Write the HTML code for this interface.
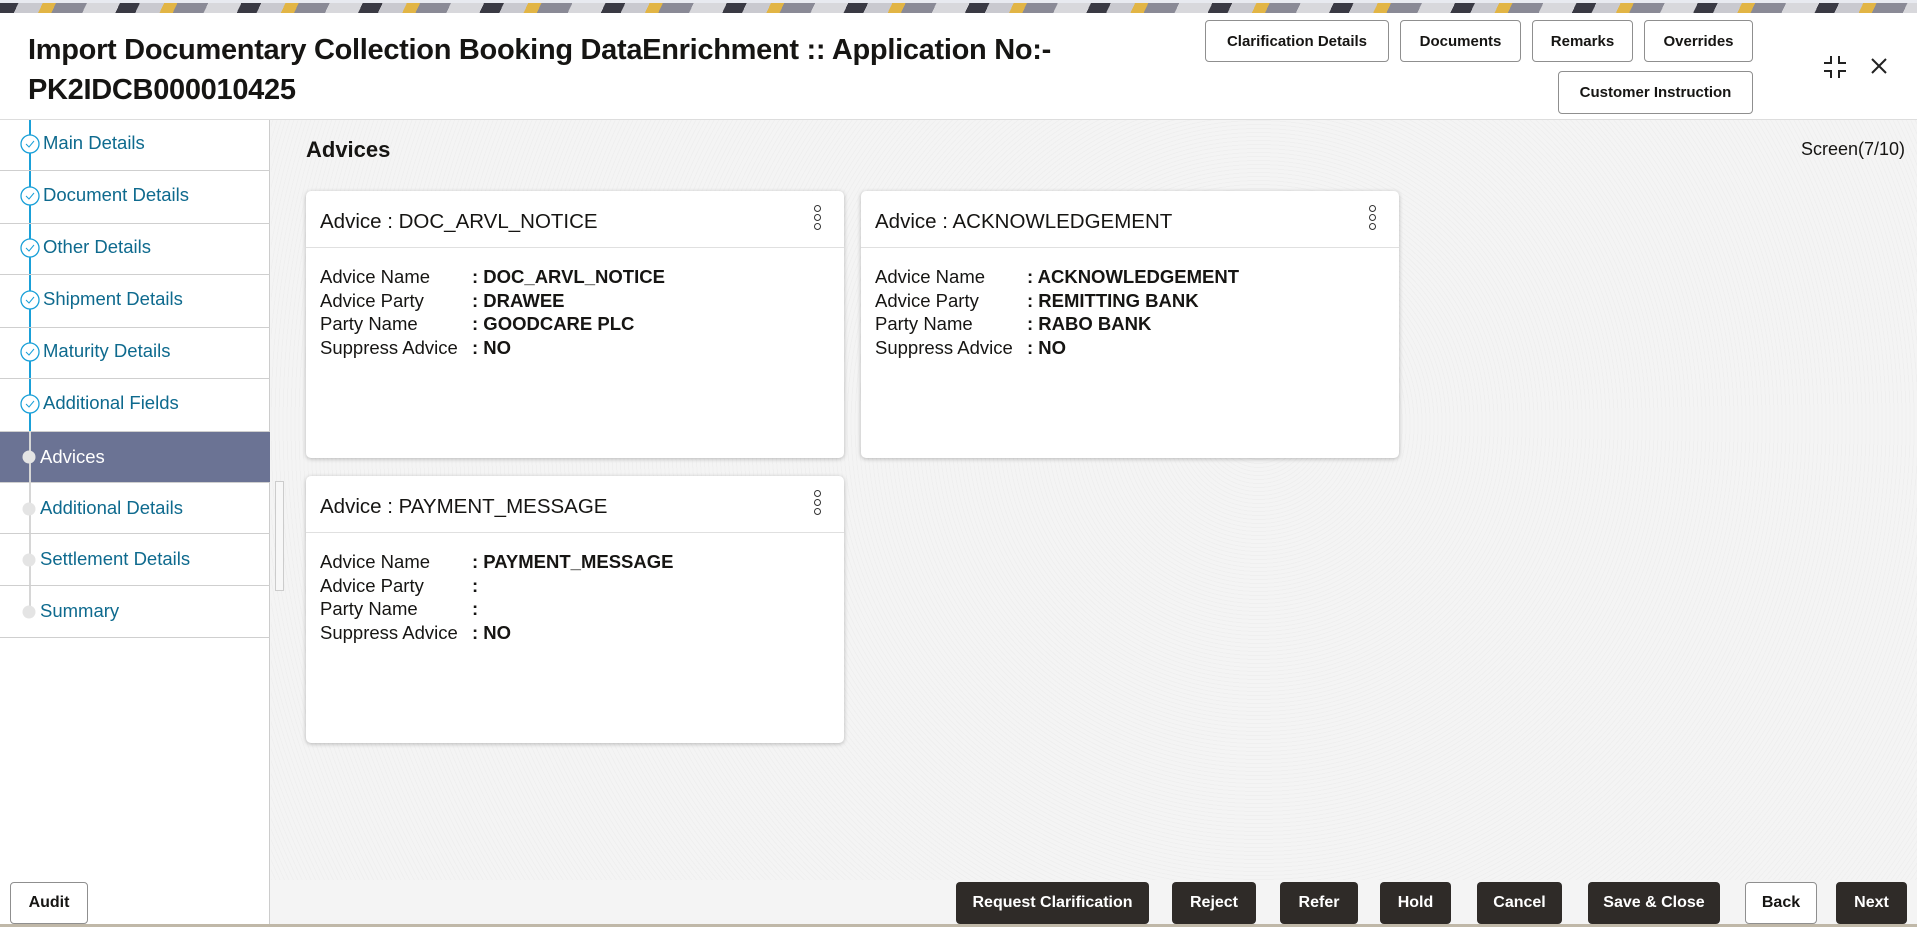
<!DOCTYPE html>
<html><head><meta charset="utf-8"><style>
*{box-sizing:border-box;margin:0;padding:0}
body{width:1917px;height:927px;overflow:hidden;font-family:"Liberation Sans",sans-serif;background:#f4f4f4;position:relative;color:#161513}
.banner{position:absolute;left:0;top:0;width:1917px;height:13px;background:repeating-linear-gradient(115deg,#3a3a44 0 18px,#c9c9cf 18px 40px,#e2b545 40px 52px,#8a8a96 52px 80px,#d8d8dc 80px 110px);}
.banner:before{content:"";position:absolute;left:0;top:0;width:100%;height:3px;background:#e8eaf0}
.hdr{position:absolute;left:0;top:13px;width:1917px;height:107px;background:#fff;border-bottom:1px solid #ddd}
.title{position:absolute;left:28px;top:17px;font-size:29px;font-weight:bold;line-height:40px;letter-spacing:-0.3px}
.btn{position:absolute;border:1px solid #8f8f8f;border-radius:4px;background:#fff;font-size:15px;font-weight:bold;display:flex;align-items:center;justify-content:center;color:#161513}
.side{position:absolute;left:0;top:120px;width:270px;height:760px;background:#fff;border-right:1px solid #ccc}
.item{position:absolute;left:0;width:270px;border-bottom:1px solid #cfcfcf;font-size:18.5px;color:#0e6a8e}
.item span{position:absolute;left:43px}
.vl{position:absolute;left:29px;width:2px}
.main{position:absolute;left:271px;top:120px;right:0;height:760px;background:repeating-radial-gradient(circle at 60% 40%,#f4f4f4 0 3px,#efefef 3px 4px)}
.card{position:absolute;width:538px;height:267px;background:#fff;border-radius:5px;box-shadow:0 1px 4px rgba(0,0,0,.25)}
.card h3{height:57px;border-bottom:1px solid #e0e0e0;font-size:20.5px;font-weight:normal;padding:19px 0 0 14px}
.rows{padding:17px 0 0 14px;font-size:18.5px;line-height:23.7px}
.rows div{display:flex}
.rows div span:first-child{width:152px}
.rows b{font-weight:bold}
.kb{position:absolute;right:23px;top:14px;width:7px}
.kb i{display:block;width:7px;height:7px;border:1.3px solid #333;border-radius:50%;margin-bottom:2px}
.foot{position:absolute;left:0;top:880px;width:1917px;height:47px;border-bottom:3px solid #c0b8a8}
.fb{position:absolute;top:2px;height:42px;border-radius:4px;background:#2f2b28;color:#fff;font-size:16px;font-weight:bold;display:flex;align-items:center;justify-content:center}
.fw{background:#fff;color:#161513;border:1px solid #8f8f8f}
</style></head><body>
<div class="banner"></div>
<div class="hdr">
<div class="title">Import Documentary Collection Booking DataEnrichment :: Application No:-<br>PK2IDCB000010425</div>
</div>
<div class="btn" style="left:1205px;top:20px;width:184px;height:42px">Clarification Details</div>
<div class="btn" style="left:1400px;top:20px;width:121px;height:42px">Documents</div>
<div class="btn" style="left:1532px;top:20px;width:101px;height:42px">Remarks</div>
<div class="btn" style="left:1644px;top:20px;width:109px;height:42px">Overrides</div>
<div class="btn" style="left:1558px;top:71px;width:195px;height:43px">Customer Instruction</div>
<svg style="position:absolute;left:1822px;top:54px" width="26" height="26" viewBox="0 0 26 26" fill="none" stroke="#222" stroke-width="2"><path d="M9 2v7H2M17 2v7h7M9 24v-7H2M17 24v-7h7"/></svg>
<svg style="position:absolute;left:1870px;top:57px" width="18" height="18" viewBox="0 0 18 18" stroke="#222" stroke-width="2"><path d="M2 2l14 14M16 2L2 16"/></svg>

<div class="side">
<div class="vl" style="top:0;height:312px;background:#1aa0d8"></div>
<div class="vl" style="top:312px;height:186px;background:#d6d6d6"></div>
<div class="item" style="top:0;height:51px"><span style="top:12px">Main Details</span></div>
<div class="item" style="top:51px;height:53px"><span style="top:13px">Document Details</span></div>
<div class="item" style="top:104px;height:51px"><span style="top:12px">Other Details</span></div>
<div class="item" style="top:155px;height:53px"><span style="top:13px">Shipment Details</span></div>
<div class="item" style="top:208px;height:51px"><span style="top:12px">Maturity Details</span></div>
<div class="item" style="top:259px;height:53px"><span style="top:13px">Additional Fields</span></div>
<div class="item" style="top:312px;height:51px;background:#6b7394;color:#fff"><span style="left:40px;top:14px">Advices</span></div>
<div class="vl" style="top:312px;height:51px;background:#d6d6d6"></div>
<div class="item" style="top:363px;height:51px"><span style="left:40px;top:14px">Additional Details</span></div>
<div class="item" style="top:414px;height:52px"><span style="left:40px;top:14px">Settlement Details</span></div>
<div class="item" style="top:466px;height:52px"><span style="left:40px;top:14px">Summary</span></div>
<svg style="position:absolute;left:0;top:0" width="60" height="520">
<g fill="#fff" stroke="#1aa0d8" stroke-width="1.3">
<circle cx="30" cy="24" r="9"/><circle cx="30" cy="76" r="9"/><circle cx="30" cy="128" r="9"/><circle cx="30" cy="180" r="9"/><circle cx="30" cy="232" r="9"/><circle cx="30" cy="284" r="9"/></g>
<g fill="none" stroke="#1aa0d8" stroke-width="1"><path d="M26 24l3 3 5-6M26 76l3 3 5-6M26 128l3 3 5-6M26 180l3 3 5-6M26 232l3 3 5-6M26 284l3 3 5-6"/></g>
<circle cx="29" cy="337" r="6.5" fill="#e4e4e4"/><circle cx="29" cy="389" r="6.5" fill="#e4e4e4"/><circle cx="29" cy="440" r="6.5" fill="#e4e4e4"/><circle cx="29" cy="492" r="6.5" fill="#e4e4e4"/>
</svg>
</div>

<div class="main">
<div style="position:absolute;left:35px;top:17px;font-size:22px;font-weight:bold">Advices</div>
<div style="position:absolute;right:12px;top:19px;font-size:18px">Screen(7/10)</div>
<div style="position:absolute;left:4px;top:361px;width:9px;height:110px;border:1px solid #ccc;background:#f7f7f7"></div>
<div class="card" style="left:35px;top:71px"><h3>Advice : DOC_ARVL_NOTICE</h3><div class="kb"><i></i><i></i><i></i></div>
<div class="rows"><div><span>Advice Name</span><b>: DOC_ARVL_NOTICE</b></div><div><span>Advice Party</span><b>: DRAWEE</b></div><div><span>Party Name</span><b>: GOODCARE PLC</b></div><div><span>Suppress Advice</span><b>: NO</b></div></div></div>
<div class="card" style="left:590px;top:71px"><h3>Advice : ACKNOWLEDGEMENT</h3><div class="kb"><i></i><i></i><i></i></div>
<div class="rows"><div><span>Advice Name</span><b>: ACKNOWLEDGEMENT</b></div><div><span>Advice Party</span><b>: REMITTING BANK</b></div><div><span>Party Name</span><b>: RABO BANK</b></div><div><span>Suppress Advice</span><b>: NO</b></div></div></div>
<div class="card" style="left:35px;top:356px"><h3>Advice : PAYMENT_MESSAGE</h3><div class="kb"><i></i><i></i><i></i></div>
<div class="rows"><div><span>Advice Name</span><b>: PAYMENT_MESSAGE</b></div><div><span>Advice Party</span><b>:</b></div><div><span>Party Name</span><b>:</b></div><div><span>Suppress Advice</span><b>: NO</b></div></div></div>
</div>

<div class="foot">
<div style="position:absolute;left:0;top:0;width:270px;height:44px;background:#fff;border-right:1px solid #ccc"></div>
<div class="fb fw" style="left:10px;width:78px">Audit</div>
<div class="fb" style="left:956px;width:193px">Request Clarification</div>
<div class="fb" style="left:1172px;width:84px">Reject</div>
<div class="fb" style="left:1280px;width:78px">Refer</div>
<div class="fb" style="left:1380px;width:71px">Hold</div>
<div class="fb" style="left:1477px;width:85px">Cancel</div>
<div class="fb" style="left:1588px;width:132px">Save &amp; Close</div>
<div class="fb fw" style="left:1745px;width:72px">Back</div>
<div class="fb" style="left:1836px;width:71px">Next</div>
</div>
</body></html>
